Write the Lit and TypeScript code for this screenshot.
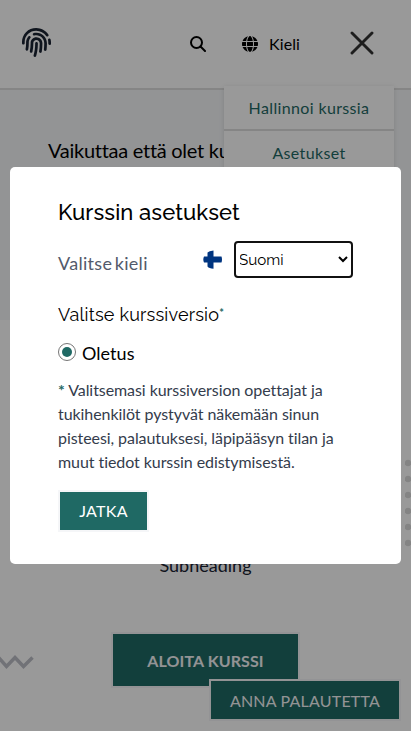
import { LitElement, html, svg, css } from "lit";
import { customElement } from "lit/decorators.js";

@customElement("app-root")
export class AppRoot extends LitElement {
  static styles = css`
    :host {
      display: block;
      position: relative;
      width: 100%;
      height: 731px;
      overflow: hidden;
      background: #fff;
      color: #000;
      font-family: Lato, sans-serif;
      font-size: 16px;
      font-variant-ligatures: none;
    }
    * { box-sizing: border-box; }
    svg { display: block; }
    .header {
      height: 90px;
      border-bottom: 2px solid #dedede;
      display: flex;
      align-items: center;
      padding: 0 37px 0 22px;
    }
    .logo { width: 29px; height: 29px; color: #1a2333; margin-top: -4px; }
    .search { margin-left: 139px; }
    .globe { margin-left: 36px; }
    .lang { margin-left: 11px; line-height: 24px; letter-spacing: 0.1px; }
    .close { margin-left: auto; margin-top: -3px; margin-right: -12px; }
    .hero {
      height: 230px;
      background: #f5f7f9;
      padding: 45px 48px 0;
      font-size: 20px;
      line-height: 30px;
      letter-spacing: -0.27px;
      white-space: nowrap;
    }
    .main {
      padding-top: 231px;
      display: flex;
      flex-direction: column;
      align-items: center;
    }
    .sub { font-size: 18px; line-height: 28px; color: #1a2333; }
    .start {
      margin-top: 53px;
      width: 189px;
      height: 56px;
      border: 2px solid #f5f6f8;
      background: #1f6964;
      color: #f5f6f8;
      font: 700 16px Lato, sans-serif;
      letter-spacing: 0.1px;
      padding: 0;
    }
    .menu {
      position: absolute;
      top: 86px;
      left: 224px;
      width: 170px;
      background: #fff;
      box-shadow: 0 1px 5px rgba(0, 0, 0, 0.12);
      color: #1f6964;
      text-align: center;
      letter-spacing: 0.36px;
    }
    .item { height: 45px; line-height: 44px; border-bottom: 2px solid #dedede; }
    .zigzag { position: absolute; left: 0; top: 654px; }
    .dots { position: absolute; right: 0; top: 456px; }
    .feedback {
      position: absolute;
      left: 209px;
      top: 679px;
      width: 192px;
      height: 42px;
      border: 2px solid #f5f6f8;
      background: #1f6964;
      color: #f5f6f8;
      font: 400 16px Lato, sans-serif;
      letter-spacing: 0.2px;
      padding: 0;
    }
    .overlay {
      position: absolute;
      inset: 0;
      background: rgba(0, 0, 0, 0.4);
      padding: 167px 10px;
    }
    .dialog {
      height: 397px;
      border-radius: 5px;
      background: #fff;
      padding: 30px 48px;
    }
    .title {
      margin: 0;
      font: 500 22px/31px Raleway, Lato, sans-serif;
      letter-spacing: 0.1px;
    }
    .row {
      display: flex;
      align-items: center;
      height: 37px;
      margin-top: 13px;
    }
    .label {
      font-size: 18px;
      color: #535a6b;
      flex: 1;
      padding-top: 6px;
      letter-spacing: 0.3px;
      word-spacing: -2.4px;
    }
    .flag { margin-right: 12px; }
    .select {
      width: 119px;
      height: 37px;
      border: 2px solid #111;
      border-radius: 4px;
      background: #fff;
      color: #000;
      font: 400 15.2px Raleway, Lato, sans-serif;
      padding: 0;
      text-indent: -1px;
    }
    .version {
      margin: 23px 0 0;
      font: 400 18px/28px Raleway, Lato, sans-serif;
      letter-spacing: 0.2px;
      height: 28px;
      display: flex;
    }
    .star { color: #1f6964; }
    .note .star { font-weight: 700; }
    .small { font: 700 11px/24px Lato, sans-serif; }
    .choice {
      display: flex;
      align-items: center;
      height: 20px;
      margin-top: 14px;
      font-size: 18px;
      letter-spacing: 0.05px;
    }
    .radio {
      width: 18px;
      height: 18px;
      border: 1px solid #767676;
      border-radius: 50%;
      display: grid;
      place-items: center;
      margin-right: 6px;
      margin-top: -3px;
    }
    .radio::after {
      content: "";
      width: 10px;
      height: 10px;
      border-radius: 50%;
      background: #1f6964;
    }
    .note {
      margin: 15px 0 0;
      line-height: 24px;
      letter-spacing: -0.07px;
      color: #343c4c;
      white-space: nowrap;
    }
    .next {
      display: block;
      margin-top: 16px;
      width: 91px;
      height: 42px;
      border: 2px solid #f5f6f8;
      background: #1f6964;
      color: #fff;
      font: 400 16px Lato, sans-serif;
      letter-spacing: 0.25px;
      padding: 0 0 2px;
    }
  `;

  render() {
    return html`
      <header class="header">
        <svg class="logo" viewBox="0 0 512 512" fill="currentColor">
          <path d="M256.12 245.96c-13.25 0-24 10.74-24 24 1.14 72.25-8.14 141.9-27.7 211.55-2.73 9.72 2.15 30.49 23.12 30.49 10.48 0 20.11-6.92 23.09-17.52 13.53-47.91 31.04-125.41 29.48-224.52.01-13.25-10.73-24-23.99-24zm-.86-81.73C194 164.16 151.25 211.3 152.1 265.32c.75 47.94-3.75 95.91-13.37 142.55-2.69 12.98 5.67 25.69 18.64 28.36 13.05 2.67 25.67-5.66 28.36-18.64 10.34-50.09 15.17-101.58 14.37-153.02-.41-25.95 19.92-52.49 54.45-52.34 31.31.47 57.15 25.34 57.62 55.47.77 48.05-2.81 96.33-10.61 143.55-2.17 13.06 6.69 25.42 19.76 27.58 19.97 3.33 26.81-15.1 27.58-19.77 8.28-50.03 12.06-101.21 11.27-152.11-.88-55.8-47.94-101.88-104.91-102.72zm-110.69-19.78c-10.3-8.34-25.37-6.8-33.76 3.48-25.62 31.5-39.39 71.28-38.75 112 .59 37.58-2.47 75.27-9.11 112.05-2.34 13.05 6.31 25.53 19.36 27.89 20.11 3.5 27.07-14.81 27.89-19.36 7.19-39.84 10.5-80.66 9.86-121.33-.47-29.88 9.2-57.88 28-80.97 8.35-10.28 6.79-25.39-3.49-33.76zm109.47-62.33c-15.41-.41-30.87 1.44-45.78 4.97-12.89 3.06-20.87 15.98-17.83 28.89 3.06 12.89 16 20.83 28.89 17.83 11.05-2.61 22.47-3.77 34-3.75 75.43 1.13 137.73 61.5 138.88 134.58.59 37.88-1.28 76.11-5.58 113.63-1.5 13.17 7.95 25.08 21.11 26.58 16.72 1.95 25.51-11.88 26.58-21.11a929.06 929.06 0 0 0 5.89-119.85c-1.56-98.75-85.07-180.33-186.16-181.77zm252.07 121.45c-2.86-12.92-15.51-21.2-28.61-18.27-12.94 2.86-21.12 15.66-18.26 28.61 4.71 21.41 4.91 37.41 4.7 61.6-.11 13.27 10.55 24.09 23.8 24.2h.2c13.17 0 23.89-10.61 24-23.8.18-22.18.4-44.11-5.83-72.34zm-40.12-90.72C417.29 43.46 337.6 1.29 252.81.02 183.02-.82 118.47 24.91 70.46 72.94 24.09 119.37-.9 181.04.14 246.65l-.12 21.47c-.39 13.25 10.03 24.31 23.28 24.69.23.02.48.02.72.02 12.92 0 23.59-10.3 23.97-23.3l.16-23.64c-.83-52.5 19.16-101.86 56.28-139 38.76-38.8 91.34-59.67 147.68-58.86 69.45 1.03 134.73 35.56 174.62 92.39 7.61 10.86 22.56 13.45 33.42 5.86 10.84-7.62 13.46-22.59 5.84-33.43z" />
        </svg>
        <svg class="search" width="16" height="16" viewBox="0 0 16 16" fill="none" stroke="#000" stroke-width="2">
          <circle cx="6.5" cy="6.5" r="5.5" />
          <path d="M10.5 10.5 15 15" stroke-linecap="round" />
        </svg>
        <svg class="globe" width="16" height="16" viewBox="0 0 512 512">
          <path d="M352 256c0 22.2-1.2 43.6-3.3 64H163.3c-2.2-20.4-3.3-41.8-3.3-64s1.200-43.600 3.300-64H348.700c2.200 20.400 3.300 41.800 3.300 64zm28.800-64H503.900c5.300 20.500 8.100 41.900 8.100 64s-2.800 43.500-8.100 64H380.800c2.100-20.600 3.200-42 3.200-64s-1.100-43.400-3.200-64zm112.600-32H376.700c-10-63.900-29.800-117.400-55.300-151.600c78.300 20.700 142 77.500 171.900 151.600zM344.300 160H167.700c6.100-36.400 15.500-68.600 27-94.700c10.500-23.600 22.200-40.700 33.500-51.500C239.400 3.200 248.700 0 256 0s16.600 3.200 27.800 13.800c11.300 10.800 23 27.900 33.500 51.500c11.600 26 20.900 58.200 27 94.700zM135.300 160H18.600C48.600 85.900 112.200 29.100 190.600 8.400C165.100 42.600 145.300 96.100 135.300 160zM8.100 192H131.200c-2.100 20.600-3.200 42-3.200 64s1.100 43.400 3.200 64H8.100C2.800 299.500 0 278.100 0 256s2.800-43.500 8.100-64zM194.700 446.600c-11.600-26-20.900-58.200-27-94.600H344.300c-6.100 36.400-15.500 68.600-27 94.600c-10.500 23.600-22.200 40.700-33.500 51.500C272.600 508.800 263.300 512 256 512s-16.600-3.200-27.800-13.800c-11.300-10.800-23-27.900-33.500-51.500zM135.300 352c10 63.900 29.800 117.400 55.300 151.600C112.200 482.900 48.600 426.100 18.600 352H135.300zm358.100 0c-30 74.100-93.600 130.900-171.900 151.600c25.500-34.200 45.200-87.700 55.300-151.600H493.400z" />
        </svg>
        <span class="lang">Kieli</span>
        <svg class="close" width="48" height="24" viewBox="0 0 48 24" stroke="#333" stroke-width="2.9" stroke-linecap="round">
          <path d="M14 2 34 22M34 2 14 22" />
        </svg>
      </header>
      <section class="hero">Vaikuttaa että olet ku</section>
      <main class="main">
        <div class="sub">Subheading</div>
        <button class="start">ALOITA KURSSI</button>
      </main>
      <svg class="zigzag" width="36" height="18" viewBox="0 0 36 18" fill="none" stroke="#bcbec6" stroke-width="3.500">
        <path d="M-2 3 6.500 12.500 15 3.500 23.500 12.500 32.500 3.500" />
      </svg>
      <svg class="dots" width="6" height="96" viewBox="0 0 6 96" fill="#dcdcdc">
        ${[7, 23, 39, 55, 71, 87].map((y) => svg`<circle cx="3" cy=${y} r="3.2" />`)}
      </svg>
      <nav class="menu">
        <div class="item">Hallinnoi kurssia</div>
        <div class="item">Asetukset</div>
      </nav>
      <button class="feedback">ANNA PALAUTETTA</button>
      <div class="overlay">
        <div class="dialog">
          <h1 class="title">Kurssin asetukset</h1>
          <div class="row">
            <span class="label">Valitse kieli</span>
            <svg class="flag" width="19" height="20" viewBox="0 0 19 20" fill="#003580">
              <path d="M4.500 2.500Q6 .8 10.500.5V6.500H18.500Q19.500 9.500 18.500 12.500H10.500V18.800Q6 18.500 4.500 16.500V12.500H1Q-.4 9.500 1 6.500H4.500Z" />
            </svg>
            <select class="select"><option>Suomi</option></select>
          </div>
          <h2 class="version">Valitse kurssiversio<span class="star small">*</span></h2>
          <div class="choice"><span class="radio"></span>Oletus</div>
          <p class="note">
            <span class="star">*</span> Valitsemasi kurssiversion opettajat ja<br />tukihenkilöt pystyvät näkemään sinun<br />pisteesi, palautuksesi, läpipääsyn tilan ja<br />muut tiedot kurssin edistymisestä.
          </p>
          <button class="next">JATKA</button>
        </div>
      </div>
    `;
  }
}
